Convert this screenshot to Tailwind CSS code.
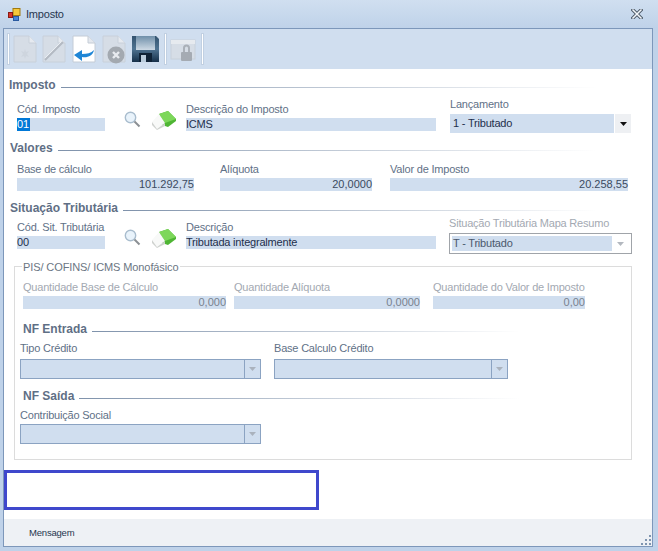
<!DOCTYPE html>
<html lang="en">
<head>
  <meta charset="UTF-8">
  <title>Imposto</title>
  <script src="https://cdn.jsdelivr.net/npm/@tailwindcss/browser@4"></script>
</head>
<body class="w-[658px] h-[551px] overflow-hidden bg-[#bfd2e9] font-['Liberation_Sans',sans-serif] text-[11px] tracking-[-0.2px] leading-[14px] text-[#5f7187] whitespace-nowrap">
  <!-- Title bar -->
  <div class="h-[28px] flex items-center pl-[8px] pr-[15px] bg-gradient-to-b from-[#d0dff0] to-[#bfd2e9]">
    <svg width="13" height="13" viewBox="0 0 13 13">
      <rect x="5" y="0.5" width="7" height="7" fill="#f7c83a" stroke="#a07a10"/>
      <rect x="0.5" y="4.5" width="4" height="5" fill="#d8362a" stroke="#8a1a14"/>
      <rect x="5.5" y="8.5" width="5" height="4" fill="#4a86d8" stroke="#2a5aa0"/>
    </svg>
    <span class="ml-[5px] text-[#26364f]">Imposto</span>
    <svg class="ml-auto" width="12" height="10" viewBox="0 0 12 10">
      <path d="M2 1 L10 9 M10 1 L2 9" stroke="#4d5a68" stroke-width="3.4" stroke-linecap="square"/>
      <path d="M2 1 L10 9 M10 1 L2 9" stroke="#f4f7fb" stroke-width="1.5" stroke-linecap="square"/>
    </svg>
  </div>

  <!-- Window body -->
  <div class="ml-[3px] w-[650px] h-[519px] border border-[#7d97ba] bg-white flex flex-col">
    <!-- Toolbar -->
    <div class="h-[40px] shrink-0 bg-[#d0deef] flex items-center pl-[4px]">
      <div class="w-[1px] h-[30px] bg-white outline outline-[#b8c6d8]/60"></div>
      <svg class="ml-[4px] blur-[0.4px]" width="24" height="28" viewBox="0 0 24 28">
        <path d="M1 1H16L23 8V27H1Z" fill="#d6dde6" stroke="#c8d0da"/><path d="M16 1V8H23" fill="#e6eaf0" stroke="#c8d0da"/>
        <path d="M12 14l1 3 3-1-2 3 2 3-3-1-1 3-1-3-3 1 2-3-2-3 3 1Z" fill="#ced5de"/>
      </svg>
      <svg class="ml-[5px] blur-[0.4px]" width="24" height="28" viewBox="0 0 24 28">
        <path d="M1 1H16L23 8V27H1Z" fill="#d6dde6" stroke="#c8d0da"/><path d="M16 1V8H23" fill="#e6eaf0" stroke="#c8d0da"/>
        <path d="M3 25L21 7" stroke="#b3bac3" stroke-width="2"/><path d="M3 23L19 7" stroke="#e9edf2" stroke-width="1"/>
      </svg>
      <svg class="ml-[6px] blur-[0.3px]" width="24" height="28" viewBox="0 0 24 28">
        <path d="M1 1H16L23 8V27H1Z" fill="#ffffff" stroke="#c4ccd6"/><path d="M16 1V8H23" fill="#e4e8ee" stroke="#c4ccd6"/>
        <path d="M22 15C21 21 15 23 10 22V26L2 20L10 15V19C15 19 19 18 22 15Z" fill="#1f86d6"/>
      </svg>
      <svg class="ml-[6px] blur-[0.4px]" width="24" height="29" viewBox="0 0 24 29">
        <path d="M1 1H16L23 8V27H1Z" fill="#d6dde6" stroke="#c8d0da"/><path d="M16 1V8H23" fill="#e6eaf0" stroke="#c8d0da"/>
        <circle cx="14" cy="20" r="8.5" fill="#a3a9b0"/>
        <path d="M11 17L17 23M17 17L11 23" stroke="#e8ebef" stroke-width="2.4"/>
      </svg>
      <svg class="ml-[5px] blur-[0.3px]" width="29" height="28" viewBox="0 0 29 28">
        <defs>
          <linearGradient id="disk" x1="0" y1="0" x2="0" y2="1"><stop offset="0" stop-color="#33536f"/><stop offset="0.5" stop-color="#4f7391"/><stop offset="1" stop-color="#16304a"/></linearGradient>
          <linearGradient id="label" x1="0" y1="0" x2="0" y2="1"><stop offset="0" stop-color="#6f8fa9"/><stop offset="1" stop-color="#cdd9e4"/></linearGradient>
        </defs>
        <path d="M1 1H25L28 4V27H1Z" fill="url(#disk)"/>
        <rect x="5" y="1" width="19" height="14" fill="url(#label)"/>
        <rect x="8" y="18" width="13" height="9" fill="#0f2236"/>
        <rect x="10" y="20" width="5" height="7" fill="#b9cbdb"/>
      </svg>
      <div class="ml-[5px] w-[1px] h-[30px] bg-white outline outline-[#b8c6d8]/60"></div>
      <svg class="ml-[4px] blur-[0.4px]" width="26" height="28" viewBox="0 0 26 28">
        <rect x="1" y="5" width="24" height="19" fill="#d6dde6" stroke="#c8d0da"/>
        <rect x="1" y="5" width="24" height="4" fill="#e6eaef"/>
        <path d="M13 13a3.5 3.5 0 0 1 7 0v4h-2v-4a1.5 1.5 0 0 0-3 0v4h-2Z" fill="#aab0b8"/>
        <rect x="11" y="17" width="11" height="9" rx="1" fill="#a5abb3"/>
      </svg>
      <div class="ml-[6px] w-[1px] h-[30px] bg-white outline outline-[#b8c6d8]/60"></div>
    </div>

    <!-- Form -->
    <div class="flex-1 pt-[9px]">
      <div class="flex items-center pl-[5px] pr-[55px]">
        <span class="font-bold text-[12px] tracking-normal text-[#5f6f85]">Imposto</span>
        <div class="ml-[5px] mt-[4px] flex-1 h-[1px] bg-gradient-to-r from-[#7f92ab] to-transparent"></div>
      </div>

      <div class="flex mt-[5px] pl-[13px]">
        <div class="w-[88px] pt-[5px]">
          <div class="mb-[2px]">Cód. Imposto</div>
          <div class="h-[13px] bg-[#d0deef] text-[#1e2f4c] leading-[13px]"><span class="inline-block bg-[#0078d7] text-white pr-[1px]">01</span></div>
        </div>
        <div class="w-[81px] pt-[14px] flex items-start">
          <svg class="ml-[19px]" width="17" height="17" viewBox="0 0 17 17">
            <circle cx="6.5" cy="6.5" r="5.2" fill="#e9f3fb" stroke="#a9bdce" stroke-width="1.4"/>
            <path d="M10.5 10.5L15.5 15.5" stroke="#8b8f94" stroke-width="2"/>
          </svg>
          <svg class="ml-[10px] blur-[0.3px]" width="25" height="19" viewBox="0 0 25 19">
            <path d="M8 3L17 0L25 8V10L17 16L11 14Z" fill="#4fb534"/><path d="M8 3L17 0L25 8L14 12Z" fill="#7dd75a"/>
            <path d="M1 11L8 3L14 12L6 18Z" fill="#f8f9f8"/><path d="M1 11L6 18L14 12V15L6 19L1 14Z" fill="#cfd2cf"/>
          </svg>
        </div>
        <div class="w-[250px] pt-[5px]">
          <div class="mb-[2px]">Descrição do Imposto</div>
          <div class="h-[13px] bg-[#d0deef] text-[#1e2f4c] leading-[13px]">ICMS</div>
        </div>
        <div class="ml-[14px]">
          <div class="mb-[3px]">Lançamento</div>
          <div class="flex h-[19px]">
            <div class="w-[164px] pl-[3px] bg-[#d0deef] text-[#1e2f4c] leading-[19px]">1 - Tributado</div>
            <div class="ml-[1px] w-[16px] bg-[#eef0f3] flex items-center justify-center">
              <svg width="7" height="4" viewBox="0 0 7 4"><path d="M0 0H7L3.5 4Z" fill="#111"/></svg>
            </div>
          </div>
        </div>
      </div>

      <div class="flex items-center pl-[6px] pr-[55px] mt-[8px]">
        <span class="font-bold text-[12px] tracking-normal text-[#5f6f85]">Valores</span>
        <div class="ml-[5px] mt-[4px] flex-1 h-[1px] bg-gradient-to-r from-[#7f92ab] to-transparent"></div>
      </div>

      <div class="flex mt-[7px] pl-[13px]">
        <div class="w-[177px]">
          <div class="mb-[2px]">Base de cálculo</div>
          <div class="h-[13px] bg-[#d0deef] text-[#3b4a60] leading-[13px] text-right tracking-normal">101.292,75</div>
        </div>
        <div class="ml-[26px] w-[152px]">
          <div class="mb-[2px]">Alíquota</div>
          <div class="h-[13px] bg-[#d0deef] text-[#3b4a60] leading-[13px] text-right tracking-normal">20,0000</div>
        </div>
        <div class="ml-[18px] w-[238px]">
          <div class="mb-[2px]">Valor de Imposto</div>
          <div class="h-[13px] bg-[#d0deef] text-[#3b4a60] leading-[13px] text-right tracking-normal">20.258,55</div>
        </div>
      </div>

      <div class="flex items-center pl-[6px] pr-[55px] mt-[10px]">
        <span class="font-bold text-[12px] tracking-normal text-[#5f6f85]">Situação Tributária</span>
        <div class="ml-[5px] mt-[4px] flex-1 h-[1px] bg-gradient-to-r from-[#7f92ab] to-transparent"></div>
      </div>

      <div class="flex mt-[1px] pl-[13px]">
        <div class="w-[88px] pt-[4px]">
          <div class="mb-[2px]">Cód. Sit. Tributária</div>
          <div class="h-[13px] bg-[#d0deef] text-[#1e2f4c] leading-[13px]">00</div>
        </div>
        <div class="w-[81px] pt-[13px] flex items-start">
          <svg class="ml-[19px]" width="17" height="17" viewBox="0 0 17 17">
            <circle cx="6.5" cy="6.5" r="5.2" fill="#e9f3fb" stroke="#a9bdce" stroke-width="1.4"/>
            <path d="M10.5 10.5L15.5 15.5" stroke="#8b8f94" stroke-width="2"/>
          </svg>
          <svg class="ml-[10px] blur-[0.3px]" width="25" height="19" viewBox="0 0 25 19">
            <path d="M8 3L17 0L25 8V10L17 16L11 14Z" fill="#4fb534"/><path d="M8 3L17 0L25 8L14 12Z" fill="#7dd75a"/>
            <path d="M1 11L8 3L14 12L6 18Z" fill="#f8f9f8"/><path d="M1 11L6 18L14 12V15L6 19L1 14Z" fill="#cfd2cf"/>
          </svg>
        </div>
        <div class="w-[250px] pt-[4px]">
          <div class="mb-[2px]">Descrição</div>
          <div class="h-[13px] bg-[#d0deef] text-[#1e2f4c] leading-[13px]">Tributada integralmente</div>
        </div>
        <div class="ml-[13px]">
          <div class="mb-[3px] text-[#a3a9b2]">Situação Tributária Mapa Resumo</div>
          <div class="flex w-[183px] h-[21px] border border-[#a0a4a9] p-[2px]">
            <div class="w-[160px] pl-[1px] bg-[#d0deef] text-[#4a586d] leading-[15px]">T - Tributado</div>
            <div class="flex-1 flex items-center justify-center">
              <svg width="7" height="4" viewBox="0 0 7 4"><path d="M0 0H7L3.5 4Z" fill="#b3b8bf"/></svg>
            </div>
          </div>
        </div>
      </div>

      <!-- Group box -->
      <div class="relative ml-[10px] mt-[12px] w-[618px] h-[194px] border border-[#dcdcdc] pt-[13px] pl-[8px]">
        <span class="absolute left-[7px] top-[-7px] bg-white px-[1px] tracking-[-0.1px] text-[#6b7683]">PIS/ COFINS/ ICMS Monofásico</span>

        <div class="flex text-[#a3a9b2]">
          <div class="w-[203px]">
            <div class="mb-[2px]">Quantidade Base de Cálculo</div>
            <div class="h-[13px] bg-[#d0deef] text-[#79838f] leading-[13px] text-right tracking-normal">0,000</div>
          </div>
          <div class="ml-[8px] w-[186px]">
            <div class="mb-[2px]">Quantidade Alíquota</div>
            <div class="h-[13px] bg-[#d0deef] text-[#79838f] leading-[13px] text-right tracking-normal">0,0000</div>
          </div>
          <div class="ml-[13px] w-[152px]">
            <div class="mb-[2px]">Quantidade do Valor de Imposto</div>
            <div class="h-[13px] bg-[#d0deef] text-[#79838f] leading-[13px] text-right tracking-normal">0,00</div>
          </div>
        </div>

        <div class="flex items-center mt-[13px] pr-[111px]">
          <span class="font-bold text-[12px] tracking-normal text-[#5f6f85]">NF Entrada</span>
          <div class="ml-[5px] mt-[4px] flex-1 h-[1px] bg-gradient-to-r from-[#7f92ab] to-transparent"></div>
        </div>

        <div class="flex mt-[5px] -ml-[3px]">
          <div class="w-[241px]">
            <div class="mb-[4px]">Tipo Crédito</div>
            <div class="flex h-[20px] border border-[#8ba3c2] bg-[#d0deef]">
              <div class="flex-1"></div>
              <div class="w-[16px] border-l border-[#8ba3c2] flex items-center justify-center">
                <svg width="7" height="4" viewBox="0 0 7 4"><path d="M0 0H7L3.5 4Z" fill="#aab2bd"/></svg>
              </div>
            </div>
          </div>
          <div class="ml-[13px] w-[234px]">
            <div class="mb-[4px]">Base Calculo Crédito</div>
            <div class="flex h-[20px] border border-[#8ba3c2] bg-[#d0deef]">
              <div class="flex-1"></div>
              <div class="w-[16px] border-l border-[#8ba3c2] flex items-center justify-center">
                <svg width="7" height="4" viewBox="0 0 7 4"><path d="M0 0H7L3.5 4Z" fill="#aab2bd"/></svg>
              </div>
            </div>
          </div>
        </div>

        <div class="flex items-center mt-[10px] pr-[111px]">
          <span class="font-bold text-[12px] tracking-normal text-[#5f6f85]">NF Saída</span>
          <div class="ml-[5px] mt-[4px] flex-1 h-[1px] bg-gradient-to-r from-[#7f92ab] to-transparent"></div>
        </div>

        <div class="mt-[5px] -ml-[3px] w-[241px]">
          <div class="mb-[2px]">Contribuição Social</div>
          <div class="flex h-[20px] border border-[#8ba3c2] bg-[#d0deef]">
            <div class="flex-1"></div>
            <div class="w-[16px] border-l border-[#8ba3c2] flex items-center justify-center">
              <svg width="7" height="4" viewBox="0 0 7 4"><path d="M0 0H7L3.5 4Z" fill="#aab2bd"/></svg>
            </div>
          </div>
        </div>
      </div>

      <div class="mt-[10px] w-[315px] h-[40px] border-[3px] border-[#3f48cc]"></div>
    </div>

    <!-- Status bar -->
    <div class="relative h-[27px] shrink-0 bg-[#eef1f5] flex items-center pl-[25px] text-[9.5px] text-[#26364f]">
      Mensagem
      <svg class="absolute right-0 bottom-0" width="12" height="12" viewBox="0 0 12 12" fill="#7f95b0">
        <rect x="9" y="1" width="2" height="2"/><rect x="5" y="5" width="2" height="2"/><rect x="9" y="5" width="2" height="2"/>
        <rect x="1" y="9" width="2" height="2"/><rect x="5" y="9" width="2" height="2"/><rect x="9" y="9" width="2" height="2"/>
      </svg>
    </div>
  </div>
</body>
</html>
